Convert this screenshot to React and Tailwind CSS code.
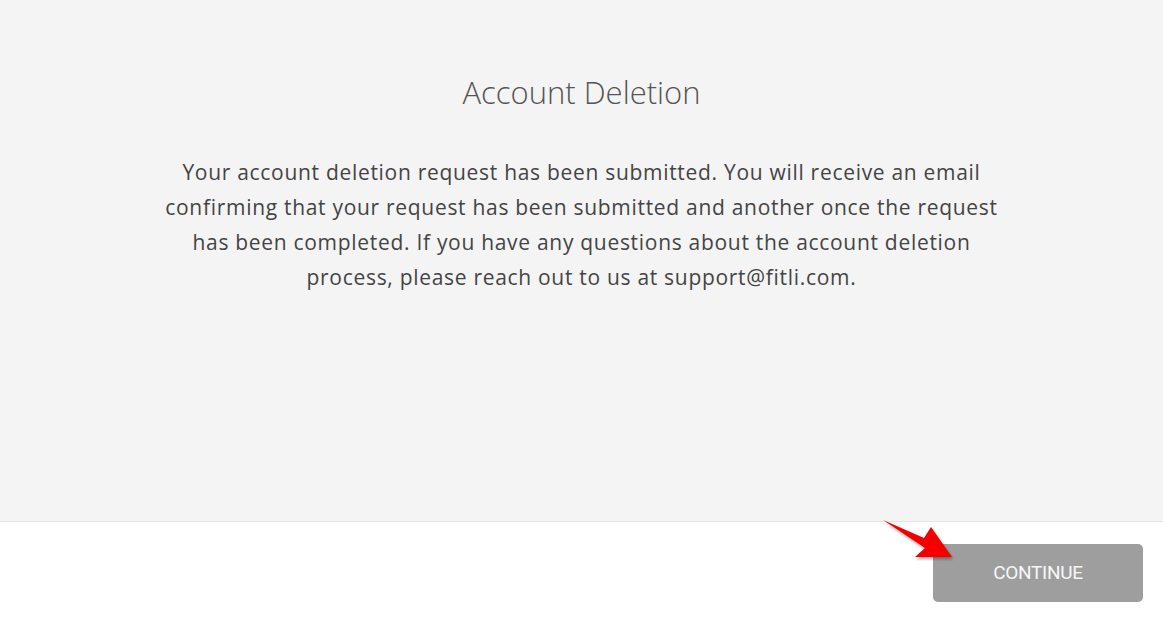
export default function App() {
  return (
    <div className="w-[1163px] h-[617px] flex flex-col bg-white" style={{ fontFamily: "'Open Sans', Roboto, sans-serif" }}>
      <div className="h-[522px] bg-[#f4f4f4] border-b border-[#e6e6e6] flex flex-col items-center pt-[70px]">
        <h1 className="text-[31px] font-light text-[#555] leading-[44px]">Account Deletion</h1>
        <p className="mt-[41px] text-center text-[21px] leading-[35px] tracking-[0.7px] text-[#444] font-normal">
          Your account deletion request has been submitted. You will receive an email<br />
          confirming that your request has been submitted and another once the request<br />
          has been completed. If you have any questions about the account deletion<br />
          process, please reach out to us at support@fitli.com.
        </p>
      </div>
      <div className="flex-1 flex justify-end items-start pt-[22px] pr-[20px] relative">
        <button className="w-[210px] h-[58px] rounded-[5px] bg-[#9e9e9e] text-[#f7f7f7] text-[19px] tracking-[-0.3px] flex items-center justify-center" style={{ fontFamily: "Roboto, sans-serif" }}>
          CONTINUE
        </button>
        <svg className="absolute left-[880px] top-[-4px]" width="80" height="50" viewBox="880 518 80 50" style={{ filter: "drop-shadow(1px 2px 1.5px rgba(0,0,0,0.35))" }}>
          <polygon points="883,520 924,538 931,527 952,557 915,557 925,548" fill="#f40000" />
        </svg>
      </div>
    </div>
  );
}
